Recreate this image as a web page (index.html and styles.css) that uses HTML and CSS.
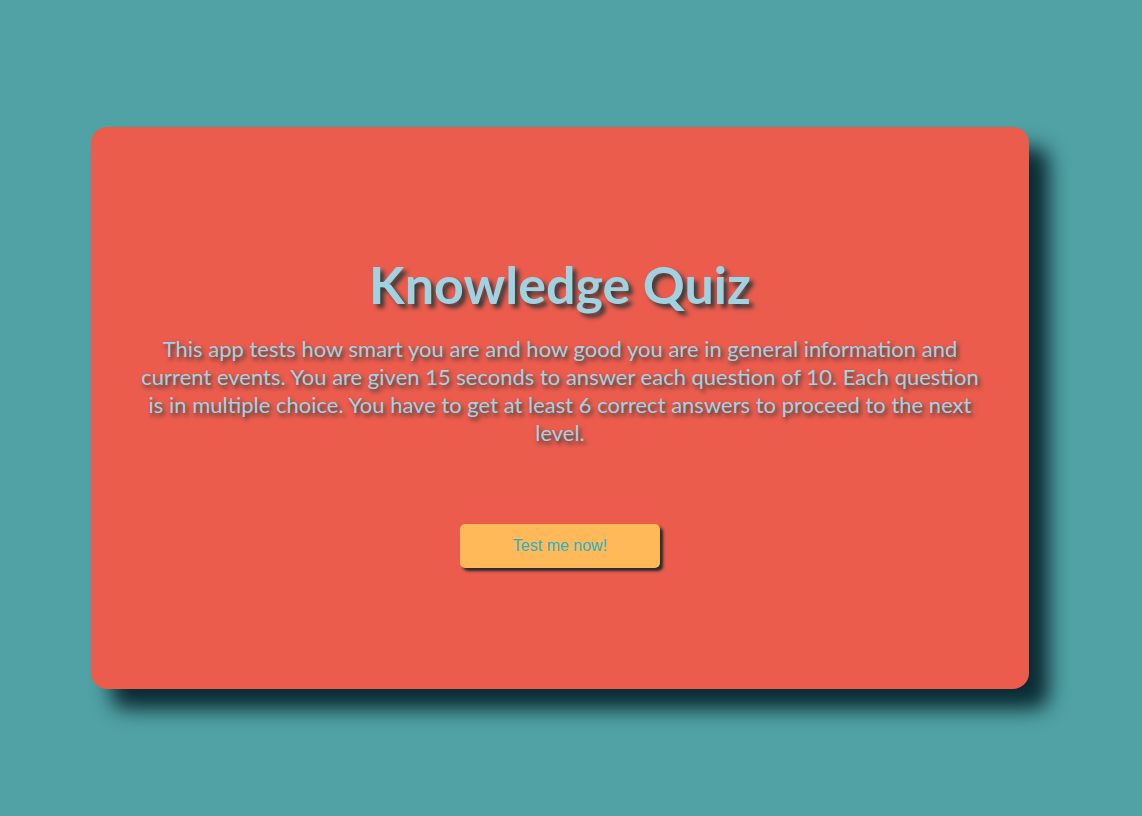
FILE: index.html
```html
<!DOCTYPE html>
<html lang="en">
<head>
<meta charset="utf-8">
<title>Knowledge Quiz</title>
<link rel="stylesheet" href="styles.css">
</head>
<body>
<main class="card">
  <h1 class="title">Knowledge Quiz</h1>
  <p class="intro">This app tests how smart you are and how good you are in general information and current events. You are given 15 seconds to answer each question of 10. Each question is in multiple choice. You have to get at least 6 correct answers to proceed to the next level.</p>
  <button class="start">Test me now!</button>
</main>
</body>
</html>
```
FILE: styles.css
```css
html, body {
  margin: 0;
  padding: 0;
}
body {
  background: #50a2a5;
  min-height: 816px;
  padding-top: 127px;
  box-sizing: border-box;
  font-family: "Lato", "Open Sans", sans-serif;
}
.card {
  margin-left: 91px;
  width: 938px;
  height: 562px;
  box-sizing: border-box;
  background: #eb5c4d;
  border-radius: 16px;
  box-shadow: 20px 20px 20px #0b2b33;
  display: flex;
  flex-direction: column;
  align-items: center;
  padding: 122px 40px 0;
}
.title {
  margin: 0;
  color: #a0d3e1;
  font-size: 52px;
  font-weight: 700;
  line-height: 70px;
  text-shadow: 4px 4px 4px #3a3a3a;
}
.intro {
  margin: 16px 0 0;
  max-width: 846px;
  color: #a0d3e1;
  font-size: 22px;
  line-height: 28px;
  text-align: center;
  text-shadow: 2px 3px 4px #3a3a3a;
}
.start {
  margin-top: 77px;
  width: 200px;
  height: 44px;
  border: none;
  border-radius: 5px;
  background: #ffb958;
  color: #27b3c4;
  font-family: "Liberation Sans", Arial, sans-serif;
  font-size: 16px;
  box-shadow: 3px 3px 3px #1e2a2e;
}
```
